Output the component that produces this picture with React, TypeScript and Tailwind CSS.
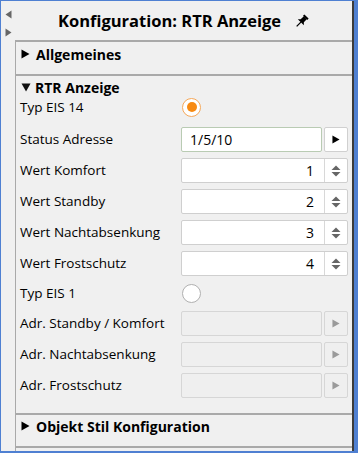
import React from "react";

const BLUE = "border-[#4f80d2]";

function Play({ color = "#000", size = 9 }: { color?: string; size?: number }) {
  return (
    <svg width={size} height={size + 1} viewBox="0 0 9 10">
      <polygon points="0.5,0.5 8.5,5 0.5,9.5" fill={color} />
    </svg>
  );
}

function Down() {
  return (
    <svg width="10" height="9" viewBox="0 0 10 9">
      <polygon points="0.5,0.5 9.5,0.5 5,8.5" fill="#111" />
    </svg>
  );
}

function SpinArrows() {
  return (
    <svg width="10" height="12" viewBox="0 0 10 12">
      <polygon points="5,0.5 9.5,5 0.5,5" fill="#666" />
      <polygon points="0.5,7 9.5,7 5,11.5" fill="#666" />
    </svg>
  );
}

function PinIcon() {
  return (
    <svg width="15" height="15" viewBox="0 0 14 14">
      <g transform="rotate(45 7 7)">
        <rect x="4.2" y="0.4" width="5.6" height="1.8" fill="#000" />
        <path d="M5.1 2 L8.9 2 L9.1 6 L11 7.9 L3 7.9 L4.9 6 Z" fill="#000" />
        <rect x="6.4" y="7.8" width="1.2" height="5.6" fill="#000" />
      </g>
    </svg>
  );
}

function Row({ label, children, className = "" }: { label: string; children: React.ReactNode; className?: string }) {
  return (
    <div className={`flex h-[25px] items-center ${className}`}>
      <div className="w-[161px] text-[13.5px] font-medium text-black">{label}</div>
      {children}
    </div>
  );
}

function AddressInput({ value, disabled }: { value?: string; disabled?: boolean }) {
  return (
    <div className="flex h-[25px] gap-[2px]">
      <div
        className={`flex h-full w-[141px] items-center rounded-[2px] border px-[8px] text-[14px] ${
          disabled ? "border-[#d6d6d6] bg-[#efefef]" : "border-[#b9cbb3] bg-white"
        }`}
      >
        {value}
      </div>
      <div
        className={`flex h-full w-[24px] items-center justify-center rounded-[2px] border ${
          disabled ? "border-[#d6d6d6] bg-[#efefef]" : "border-[#d0d0d0] bg-white"
        }`}
      >
        <Play color={disabled ? "#9a9a9a" : "#000"} size={8} />
      </div>
    </div>
  );
}

function Spinner({ value }: { value: string }) {
  return (
    <div className="flex h-[25px] w-[167px] rounded-[2px] border border-[#cfcfcf] bg-white">
      <div className="flex flex-1 items-center justify-end pr-[10px] text-[14px]">{value}</div>
      <div className="flex w-[23px] items-center justify-center border-l border-[#d8d8d8]">
        <SpinArrows />
      </div>
    </div>
  );
}

function Radio({ checked }: { checked?: boolean }) {
  return checked ? (
    <div className="flex h-[19px] w-[19px] items-center justify-center rounded-full border-[1.5px] border-[#f5a85a] bg-white">
      <div className="h-[10px] w-[10px] rounded-full bg-[#f78a12]" />
    </div>
  ) : (
    <div className="h-[19px] w-[19px] rounded-full border border-[#b0b0b0] bg-white" />
  );
}

export default function App() {
  return (
    <div
      className={`flex h-[453px] w-[358px] border-t border-l border-r-[4px] border-b-2 ${BLUE} bg-[#f0f0f0] font-['Open_Sans',sans-serif] text-black`}
    >
      {/* collapse arrows */}
      <div className="flex w-[14px] flex-col items-center pt-[9px]">
        <svg width="7" height="9" viewBox="0 0 7 9">
          <polygon points="6.5,0.5 6.5,8.5 0.5,4.5" fill="#666" />
        </svg>
        <svg width="7" height="9" viewBox="0 0 7 9" className="mt-[9px]">
          <polygon points="0.5,0.5 6.5,4.5 0.5,8.5" fill="#666" />
        </svg>
      </div>

      <div className="flex flex-1 flex-col border-r-2 border-[#3c3c3c]">
        <div className="flex h-[39px] items-center justify-center gap-[13px] pt-[2px]">
          <span className="text-[16.5px] font-bold">Konfiguration: RTR Anzeige</span>
          <PinIcon />
        </div>

        <div className="flex flex-1 flex-col border-t-2 border-l border-[#a9a9a9]">
          {/* Allgemeines */}
          <div className="h-[34px] border-b-2 border-[#a9a9a9] pt-[3px] pl-[5px]">
            <div className="flex h-[18px] items-center gap-[6px] text-[14px] font-bold">
              <Play />
              <span>Allgemeines</span>
            </div>
          </div>

          {/* RTR Anzeige */}
          <div className="flex flex-col border-b-2 border-[#a9a9a9] pb-[15px] pl-[4px]">
            <div className="flex h-[22px] items-center gap-[4px] pl-[1px] text-[14px] font-bold">
              <Down />
              <span>RTR Anzeige</span>
            </div>
            <div className="flex h-[18px] items-center">
              <div className="w-[162px] text-[13.5px] font-medium">Typ EIS 14</div>
              <Radio checked />
            </div>
            <Row label="Status Adresse" className="mt-[11px]">
              <AddressInput value="1/5/10" />
            </Row>
            <Row label="Wert Komfort" className="mt-[6px]">
              <Spinner value="1" />
            </Row>
            <Row label="Wert Standby" className="mt-[6px]">
              <Spinner value="2" />
            </Row>
            <Row label="Wert Nachtabsenkung" className="mt-[6px]">
              <Spinner value="3" />
            </Row>
            <Row label="Wert Frostschutz" className="mt-[6px]">
              <Spinner value="4" />
            </Row>
            <div className="mt-[9px] flex h-[17px] items-center">
              <div className="w-[162px] text-[13.5px] font-medium">Typ EIS 1</div>
              <Radio />
            </div>
            <Row label="Adr. Standby / Komfort" className="mt-[9px]">
              <AddressInput disabled />
            </Row>
            <Row label="Adr. Nachtabsenkung" className="mt-[6px]">
              <AddressInput disabled />
            </Row>
            <Row label="Adr. Frostschutz" className="mt-[6px]">
              <AddressInput disabled />
            </Row>
          </div>

          {/* Objekt Stil */}
          <div className="h-[33px] border-b-2 border-[#a9a9a9] pt-[2px] pl-[5px]">
            <div className="flex h-[18px] items-center gap-[6px] text-[14px] font-bold">
              <Play />
              <span>Objekt Stil Konfiguration</span>
            </div>
          </div>
          <div className="flex-1" />
        </div>
      </div>
    </div>
  );
}
